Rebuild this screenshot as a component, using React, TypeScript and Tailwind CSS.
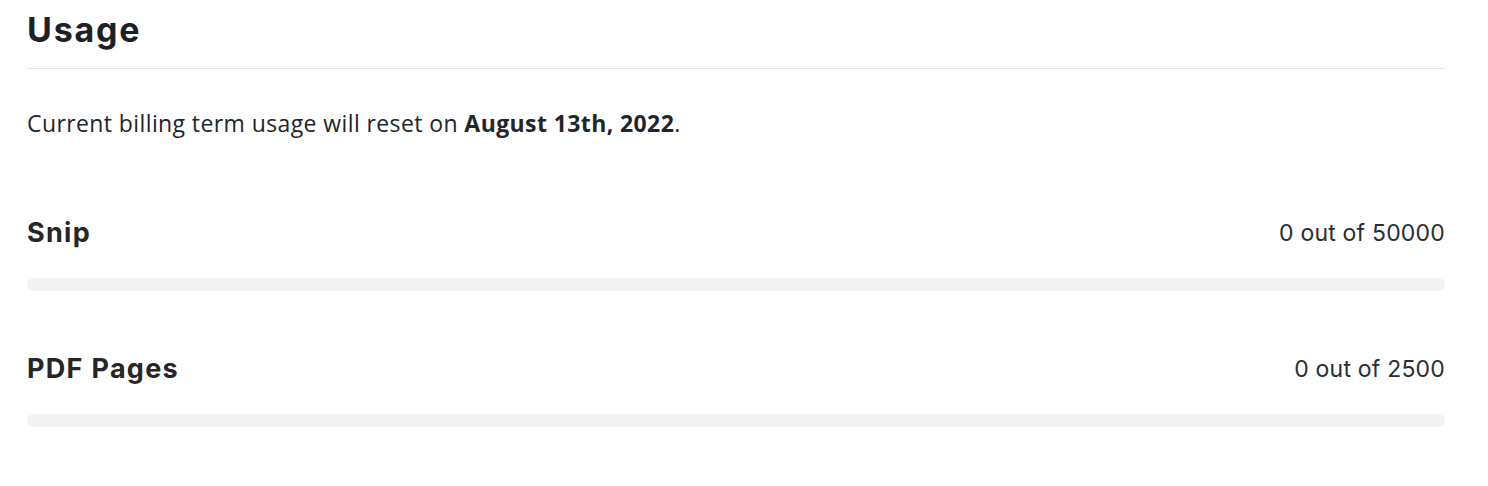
export default function App() {
  const items = [
    { name: 'Snip', used: 0, total: 50000 },
    { name: 'PDF Pages', used: 0, total: 2500 },
  ];

  return (
    <div className="min-h-screen bg-white">
      <div className="ml-[27px] w-[1418px]">
        <div className="pt-[10px] pb-[18px] border-b border-[#e6e6e6]">
          <h1 className="text-[34px] leading-[40px] font-bold text-[#1d2025] font-['Inter',sans-serif] tracking-[1.8px]">
            Usage
          </h1>
        </div>

        <p className="mt-[40px] text-[23px] leading-[28px] text-[#22252a] font-['Open_Sans',sans-serif] tracking-[0.4px]">
          Current billing term usage will reset on <span className="font-bold">August 13th, 2022</span>.
        </p>

        {items.map((it, i) => (
          <div key={it.name} className={i === 0 ? 'mt-[80px]' : 'mt-[62px]'}>
            <div className="flex items-center justify-between h-[32px]">
              <h2 className="text-[27px] font-bold text-[#262626] font-['Inter',sans-serif] tracking-[1.3px]">{it.name}</h2>
              <span className="text-[23px] text-[#2a2d33] font-['Inter',sans-serif] tracking-[0.2px]">
                {it.used} out of {it.total}
              </span>
            </div>
            <div className="mt-[29px] h-[13px] rounded-full bg-[#f3f3f3] overflow-hidden">
              <div className="h-full rounded-full bg-[#3b82f6]" style={{ width: `${(it.used / it.total) * 100}%` }} />
            </div>
          </div>
        ))}
      </div>
    </div>
  );
}
